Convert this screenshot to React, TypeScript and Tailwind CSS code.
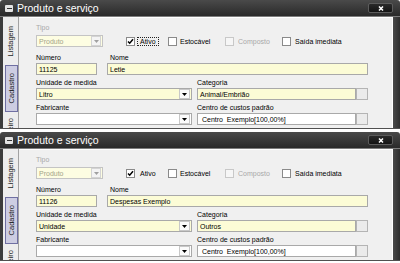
import React from "react";

const FONT = { fontFamily: '"Liberation Sans", Arial, sans-serif' };

function Checkbox({ checked, disabled }: { checked?: boolean; disabled?: boolean }) {
  return (
    <div
      className={
        disabled
          ? "w-[9px] h-[9px] border border-[#c8c8c8] bg-[#f6f6f6] shrink-0"
          : "w-[9px] h-[9px] border border-[#8a8a8a] bg-white shrink-0 flex items-center justify-center"
      }
    >
      {checked && (
        <svg width="7" height="7" viewBox="0 0 7 7">
          <path d="M1 3.4 L2.7 5.2 L6 1.2" stroke="#000" strokeWidth="1.5" fill="none" />
        </svg>
      )}
    </div>
  );
}

function Arrow({ disabled }: { disabled?: boolean }) {
  return (
    <div
      className={
        disabled
          ? "w-[10px] h-[10px] mr-px flex items-center justify-center bg-[#f4f4f4] border border-[#d4d4d4]"
          : "w-[11px] h-[10px] mr-px flex items-center justify-center bg-[#fbfbfb] border border-[#c8c8c8]"
      }
    >
      <svg width="5" height="3" viewBox="0 0 5 3">
        <path d="M0 0H5L2.5 3Z" fill={disabled ? "#a0a0a0" : "#000"} />
      </svg>
    </div>
  );
}

function Panel({
  num,
  nome,
  unidade,
  categoria,
  focus,
}: {
  num: string;
  nome: string;
  unidade: string;
  categoria: string;
  focus?: boolean;
}) {
  return (
    <div className="h-[132px] flex flex-col bg-white overflow-hidden">
      {/* title bar */}
      <div className="h-[16px] shrink-0 flex items-center bg-gradient-to-b from-[#4a4a4a] to-[#2a2a2a] rounded-t-[3px]">
        <div className="ml-[5px] w-[8px] h-[7px] bg-[#e4e4e4] rounded-[1px] flex items-center justify-center">
          <div className="w-[5px] h-px bg-[#333]" />
        </div>
        <span className="ml-[4px] text-white text-[10.5px] leading-none">Produto e serviço</span>
        <div className="ml-auto mr-[7px] w-[25px] h-[10px] rounded-[2px] border border-[#5c5c5c] bg-gradient-to-b from-[#2a2a2a] to-[#141414] flex items-center justify-center">
          <svg width="6" height="5" viewBox="0 0 6 5">
            <path d="M1 0.5 L5 4.5 M5 0.5 L1 4.5" stroke="#fff" strokeWidth="1.5" />
          </svg>
        </div>
      </div>
      <div className="h-px shrink-0 bg-[#7d7d7d]" />
      {/* body */}
      <div className="h-[111px] shrink-0 flex">
        <div className="w-[3px] bg-[#3c3c3c]" />
        <div className="w-[15px] bg-[#ededed] flex flex-col overflow-hidden text-[7.5px] leading-none text-[#1e1e1e]">
          <div className="h-[48px] shrink-0 flex items-center justify-center">
            <span className="[writing-mode:vertical-rl] rotate-180">Listagem</span>
          </div>
          <div className="h-[47px] shrink-0 ml-[2px] border border-[#6f6fa2] bg-[#cdcde2] flex items-center justify-center">
            <span className="[writing-mode:vertical-rl] rotate-180">Cadastro</span>
          </div>
          <div className="flex-1 min-h-0 overflow-hidden pt-[6px] flex justify-center items-start">
            <span className="[writing-mode:vertical-rl] rotate-180 whitespace-nowrap">Financeiro</span>
          </div>
        </div>
        <div className="w-px bg-[#a2a2a2]" />
        <div className="w-[373px] bg-[#f0f0f0] border-t border-white pl-[17px] pt-[5px] text-[7px] leading-[9px] text-black">
          <div className="text-[#a8a8a8]">Tipo</div>
          <div className="mt-[3px] h-[12px] flex items-center">
            <div className="w-[67px] h-[12px] border border-[#c4c4c4] bg-[#fdfde2] flex items-center justify-between">
              <span className="pl-[2px] text-[#a4a488] leading-none">Produto</span>
              <Arrow disabled />
            </div>
            <div className="ml-[23px] w-[42px] flex items-center">
              <Checkbox checked />
              <span
                className={
                  focus
                    ? "ml-[2px] px-[2px] border border-dotted border-[#222] leading-[7px]"
                    : "ml-[2px] px-[2px] border border-transparent leading-[7px]"
                }
              >
                Ativo
              </span>
            </div>
            <div className="w-[57px] flex items-center">
              <Checkbox />
              <span className="ml-[3px] leading-none">Estocável</span>
            </div>
            <div className="w-[57px] flex items-center">
              <Checkbox disabled />
              <span className="ml-[4px] leading-none text-[#a8a8a8]">Composto</span>
            </div>
            <div className="flex items-center">
              <Checkbox />
              <span className="ml-[4px] leading-none">Saída imediata</span>
            </div>
          </div>

          <div className="mt-[6px] flex">
            <div className="w-[71px]">Número</div>
            <div className="pl-[3px]">Nome</div>
          </div>
          <div className="mt-px flex">
            <div className="w-[61px] h-[12px] border border-[#a9a9a9] bg-[#fcfcd6] flex items-center pl-[2px] leading-none">
              {num}
            </div>
            <div className="ml-[10px] w-[261px] h-[12px] border border-[#a9a9a9] bg-[#fcfcd6] flex items-center pl-[2px] leading-none">
              {nome}
            </div>
          </div>

          <div className="mt-[3px] flex">
            <div className="w-[161px]">Unidade de medida</div>
            <div>Categoria</div>
          </div>
          <div className="mt-px flex">
            <div className="w-[156px] h-[12px] border border-[#a9a9a9] bg-[#fcfcd6] flex items-center justify-between">
              <span className="pl-[2px] leading-none">{unidade}</span>
              <Arrow />
            </div>
            <div className="ml-[5px] w-[159px] h-[12px] border border-[#a9a9a9] bg-[#fcfcd6] flex items-center pl-[2px] leading-none">
              {categoria}
            </div>
            <div className="w-[12px] h-[12px] border border-[#b4b4b4] bg-[#ebebeb]" />
          </div>

          <div className="mt-[3px] flex">
            <div className="w-[161px]">Fabricante</div>
            <div>Centro de custos padrão</div>
          </div>
          <div className="mt-px flex">
            <div className="w-[156px] h-[12px] border border-[#a9a9a9] bg-white flex items-center justify-end">
              <Arrow />
            </div>
            <div className="ml-[5px] w-[159px] h-[12px] border border-[#a9a9a9] bg-white flex items-center pl-[2px] leading-none whitespace-pre">
              {" Centro  Exemplo[100,00%]"}
            </div>
            <div className="w-[12px] h-[12px] border border-[#b4b4b4] bg-[#ebebeb]" />
          </div>
        </div>
        <div className="w-px bg-white" />
        <div className="w-[7px] bg-gradient-to-r from-[#4a4a4a] to-[#2e2e2e]" />
      </div>
      <div className="h-px shrink-0 bg-[#505050]" />
      <div className="h-[3px] shrink-0 bg-white" />
    </div>
  );
}

export default function App() {
  return (
    <div className="w-[400px] h-[263px] overflow-hidden bg-white" style={FONT}>
      <Panel num="11125" nome="Letie" unidade="Litro" categoria="Animal/Embrião" focus />
      <Panel num="11126" nome="Despesas Exemplo" unidade="Unidade" categoria="Outros" />
    </div>
  );
}
